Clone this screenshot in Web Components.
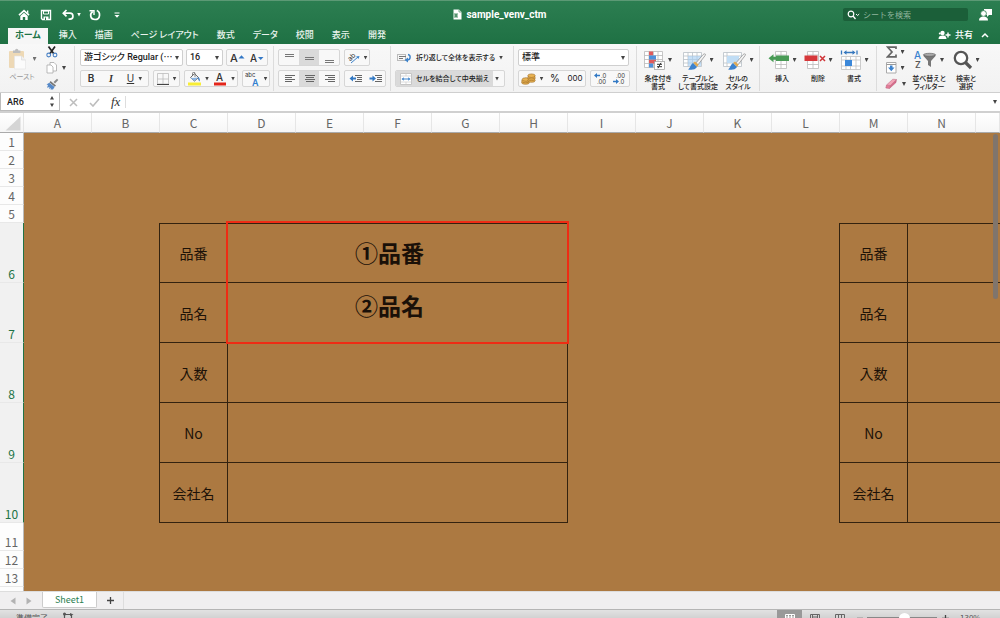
<!DOCTYPE html>
<html lang="ja">
<head>
<meta charset="utf-8">
<title>sample_venv_ctm</title>
<style>
html,body{height:100%}
body{margin:0;overflow:hidden;font-family:"Inter","Noto Sans CJK JP",sans-serif;font-size:9px;color:#222;
--green:#217346;--line:#d2d2d2;--edge:#d6d6d6}
</style>
</head>
<body>
<excel-app></excel-app>
<script>
const ICONS={
home:[12,12,'<path d="M1 6.2 6 1.7l5 4.5" fill="none" stroke="#fff" stroke-width="1.7"/><path d="M2.3 7 6 3.8 9.700 7v4H7.200V8H4.800v3H2.300z" fill="#fff"/><path d="M9 1.500h1.300v3L9 3.500z" fill="#fff"/>'],
save:[12,12,'<path d="M1.500 1.500h9v9h-8l-1-1z" fill="none" stroke="#fff" stroke-width="1.400"/><path d="M3.500 2h5v3h-5z" fill="none" stroke="#fff"/><path d="M3.500 7.500h5V11h-5z" fill="#fff"/><path d="M5 8.500h1V11H5z" fill="#217346"/>'],
undo:[12,12,'<path d="M4.500 1 1.300 4.200l3.200 3.200M1.500 4.200H8a2.900 2.900 0 0 1 0 5.900H6.500" fill="none" stroke="#fff" stroke-width="1.700"/>'],
redo:[12,12,'<path d="M7.800 1.500c4 1.500 3.800 9-1.800 9-5 0-5.500-5.800-2.300-8" fill="none" stroke="#fff" stroke-width="1.700"/><path d="M.5 1.700h4.500v4.300" fill="none" stroke="#fff" stroke-width="1.400"/>'],
more:[6,6,'<path d="M.5 1h5" stroke="#fff"/><path d="M.5 3h5L3 5.800z" fill="#fff"/>'],
doc:[9,11,'<path d="M.5.500h5.500L8.500 3v7.500h-8z" fill="#fff"/><path d="M6 .5V3h2.500" fill="none" stroke="#4b8c66" stroke-width=".7"/><path d="M1 4h4v5H1z" fill="#a9c9b5"/><path d="m2 5 2 3m0-3L2 8" stroke="#287849" stroke-width=".8"/>'],
search:[14,10,'<circle cx="4" cy="4" r="2.800" fill="none" stroke="#fff" stroke-width="1.200"/><path d="m6 6 2.500 3" stroke="#fff" stroke-width="1.300"/><path d="m9 4 1.600 1.500L12.200 4" fill="none" stroke="#fff"/>'],
person:[13,13,'<path d="M5 1h8v6h-3L8 9V7H5z" fill="#fff"/><circle cx="4.500" cy="5.500" r="2.900" fill="#fff" stroke="#267648" stroke-width=".8"/><path d="M0 12.500c0-3 2-4 4.500-4S9 9.500 9 12.500z" fill="#fff"/>'],
share:[13,10,'<circle cx="4.500" cy="3" r="2.200" fill="#fff"/><path d="M.5 9c0-2.500 1.500-3.500 4-3.500s4 1 4 3.500z" fill="#fff"/><path d="M7.500 5h5M10 2.500v5" stroke="#fff" stroke-width="1.400"/><circle cx="1.800" cy="3.600" r="1" fill="#fff"/>'],
chev:[8,6,'<path d="M1 5 4 2l3 3" fill="none" stroke="#fff" stroke-width="1.500"/>'],
paste:[20,22,'<rect x="1" y="3" width="15" height="17" rx="1" fill="#ebcfa0"/><path d="M5 5V2.500h2a1.700 1.700 0 0 1 3.400 0h2V5z" fill="#aaa"/><path d="M6.500 8h7l4 4v9h-11z" fill="#fdfdfd" stroke="#ddd" stroke-width=".6"/><path d="M13.500 8v4h4" fill="#eee" stroke="#ccc" stroke-width=".6"/>'],
cut:[12,12,'<path d="M2.500.500 8 8M9 .5 3.700 8" stroke="#222" stroke-width="1.700"/><circle cx="2.700" cy="9" r="1.900" fill="none" stroke="#4b83c6" stroke-width="1.100"/><circle cx="9" cy="9" r="1.900" fill="none" stroke="#4b83c6" stroke-width="1.100"/>'],
copy:[12,12,'<path d="M4 .5h4L10.500 3v6H4z" fill="#fff" stroke="#aaa" stroke-width=".8"/><path d="M1 3h4l2 2v6H1z" fill="#fff" stroke="#aaa" stroke-width=".8"/>'],
brush:[13,12,'<path d="m7.500 4 3.500-3.300 1.300 1.200L9 5.500z" fill="#8a8a8a"/><path d="m4.500 3 5.500 4.500-1.200 1.300L3.500 4.500z" fill="#777"/><path d="M3.300 4.700 8.600 9 7 11.500H4.500L5 10l-2 1 .5-2-2.500.800L2 7 .5 6.500z" fill="#5689c8"/>'],
aup:[15,12,'<text x="0" y="10" font-size="11" font-weight="500" fill="#333" font-family="Inter">A</text><path d="M8.500 6.500 11.500 3.300 14.500 6.500z" fill="#3478c6"/>'],
adown:[15,12,'<text x="0" y="10" font-size="10" font-weight="500" fill="#333" font-family="Inter">A</text><path d="M8 5h5.500L10.700 8z" fill="#3478c6"/>'],
border:[12,12,'<path d="M.5.500h11V11H.5zM6 .5V11M.5 6h11" fill="none" stroke="#bbb" stroke-width=".8"/><path d="M0 11.500h12" stroke="#444"/>'],
fill:[14,14,'<path d="m3.500 5.500 4-3.800 4 3.800-4 3.500z" fill="#fff" stroke="#666"/><path d="m3.500 6 4 3L11 5.500z" fill="#8ab5e4"/><path d="M5.500 4V1.500A1.200 1.200 0 0 1 8 1.500V5" fill="none" stroke="#666" stroke-width=".8"/><path d="M11 5c2 1 2 3 1.500 4.500C11.500 8.500 11 7 11 5z" fill="#3577bd"/><path d="M1 10.500h13v3H1z" fill="#f8ed35"/>'],
fcolor:[14,14,'<text x="3" y="9" font-size="10" font-weight="500" font-family="Inter" fill="#333">A</text><path d="M1 10.500h12v3H1z" fill="#e4261b"/>'],
phon:[15,15,'<text x="0" y="6" font-size="6" font-family="Inter" fill="#333">abc</text><text x="7" y="15" font-size="9" font-weight="600" font-family="Inter" fill="#337fce">A</text>'],
vtop:[10,10,'<path d="M1 1.500h9M1 3.500h9" stroke="#777"/>'],
vmid:[10,10,'<path d="M1 4.500h9M1 6.500h9" stroke="#777"/>'],
vbot:[10,10,'<path d="M1 7.500h9M1 9.500h9" stroke="#777"/>'],
left:[11,10,'<path d="M1 1.500h10M1 3.500h7M1 5.500h10M1 7.500h7" stroke="#666"/>'],
center:[11,10,'<path d="M1 1.500h10M2 3.500h8M1 5.500h10M2 7.500h8" stroke="#666"/>'],
right:[11,10,'<path d="M1 1.500h10M4 3.500h7M1 5.500h10M4 7.500h7" stroke="#666"/>'],
orient:[13,13,'<text x="1" y="9" font-size="7" font-family="Inter" fill="#333" transform="rotate(-45 4 7)">ab</text><path d="m4 12 7-6" stroke="#3c82cb"/><path d="m9 5.500 3.500-.5-1 3z" fill="#3c82cb"/>'],
out:[13,10,'<path d="M6 1.500h7M8 3.500h5M8 5.500h5M6 7.500h7" stroke="#666"/><path d="m.5 4.500 3.500-3v2h3v2H4v2z" fill="#3279c4"/>'],
in:[13,10,'<path d="M6 1.500h7M8 3.500h5M8 5.500h5M6 7.500h7" stroke="#666"/><path d="M7 4.500 3.500 1.500v2h-3v2h3v2z" fill="#3279c4"/>'],
wrap:[15,12,'<path d="M.5 2.500h8M.5 8.500h8M.5 2v7M8.500 2v7" stroke="#bbb" fill="none"/><path d="M2 4.500h7M2 6.500h4" stroke="#777"/><path d="M11 2.500c3 .5 3 5.500-1 5.500" fill="none" stroke="#3e83ca" stroke-width="1.400"/><path d="m7.500 8 3.500-2.500v5z" fill="#3e83ca"/>'],
merge:[12,12,'<path d="M.5.500h11v11H.5z" fill="#fff" stroke="#c5c5c5"/><path d="M.5 3h11M.5 9h11M6 .5V3M6 9v2.500" stroke="#ccc" stroke-width=".7"/><path d="M3 6h6" stroke="#3e83ca"/><path d="m1.500 6 2.200-1.800v3.600zM10.500 6 8.300 4.200v3.600z" fill="#3e83ca"/>'],
coins:[15,12,'<g fill="#e9b352" stroke="#9b6927" stroke-width=".6"><ellipse cx="4.500" cy="9.500" rx="3.900" ry="1.800"/><ellipse cx="4.500" cy="8" rx="3.900" ry="1.800"/><ellipse cx="5" cy="6.500" rx="3.900" ry="1.800"/><ellipse cx="10.500" cy="7.500" rx="3.700" ry="1.800"/><ellipse cx="10.500" cy="5.800" rx="3.700" ry="1.800"/><ellipse cx="10.500" cy="4.200" rx="3.700" ry="1.800"/><ellipse cx="10.500" cy="2.700" rx="3.700" ry="1.800"/></g>'],
inc:[13,13,'<path d="m0 3.500 3-2.500v1.700h3v1.600H3V6z" fill="#3279c4"/><text x="7" y="6" font-size="6" font-family="Inter" fill="#333">.0</text><text x="3" y="12" font-size="6" font-family="Inter" fill="#333">.00</text>'],
dec:[13,13,'<path d="m6 9.500-3-2.500v1.700H0v1.600h3V12z" fill="#3279c4"/><text x="3" y="6" font-size="6" font-family="Inter" fill="#333">.00</text><text x="6" y="12" font-size="6" font-family="Inter" fill="#333">.0</text>'],
cond:[21,20,'<path d="M.5 1.500h18v16H.5zM5 1.500v16M9.500 1.500v16M14 1.500v16M.5 5.500h18M.5 9.500h18M.5 13.500h18" fill="#fff" stroke="#b9b9b9" stroke-width=".8"/><path d="M5 1.500h4v4H5zM5 9.500h7v4H5z" fill="#df5a5c"/><path d="M5 5.500h7v4H5zM5 13.500h4v4H5z" fill="#4c91dc"/><rect x="10.500" y="11.500" width="10" height="8" fill="#fff" stroke="#999" stroke-width=".7"/><path d="M13 14.300h5M13 16.700h5M17 12.800l-3 5.400" stroke="#333"/>'],
table:[24,21,'<path d="M.5 2.500h18v14H.5zM5 2.500v14M9.500 2.500v14M14 2.500v14M.5 6h18M.5 9.500h18M.5 13h18" fill="#fff" stroke="#b9c0c6" stroke-width=".8"/><path d="M5 6h13v10H5z" fill="#a9d0f2" opacity=".65"/><path d="m12 14 8-9.300c2-1.700 3.300-.7 1.800 1.300L14 16z" fill="#f4f4f4" stroke="#888" stroke-width=".7"/><path d="m10 13 2-1.500 3.500 3L14 17z" fill="#dfaa55"/><path d="m10 13 4 4c-2 3-5 3-9 2.500 2-1 2.500-5 5-6.500z" fill="#3c82cd"/>'],
style:[24,21,'<path d="M.5 2.500h18v14H.5zM4 2.500v14M.5 6h18M.5 13h18" fill="#fff" stroke="#b9c0c6" stroke-width=".8"/><path d="M4 6h12v7H4z" fill="#c0ddf5"/><path d="m12 14 8-9.300c2-1.700 3.300-.7 1.800 1.300L14 16z" fill="#f4f4f4" stroke="#888" stroke-width=".7"/><path d="m10 13 2-1.500 3.500 3L14 17z" fill="#dfaa55"/><path d="m10 13 4 4c-2 3-5 3-9 2.500 2-1 2.500-5 5-6.500z" fill="#3c82cd"/>'],
insert:[22,20,'<path d="M7.500 1.500h11v17h-11zM13 1.500v17M7.500 5h11M7.500 14.500h11" fill="#fff" stroke="#bbb" stroke-width=".8"/><path d="M8 5.500h13v5.500H8z" fill="#499b56"/><path d="m.5 8.200 5-4v2.500H8v3H5.500v2.500z" fill="#499b56"/>'],
delete:[22,20,'<path d="M3.500 1.500h11v17h-11zM9 1.500v17M3.500 5h11M3.500 14.500h11" fill="#fff" stroke="#bbb" stroke-width=".8"/><path d="M.5 5.500h13V11H.5z" fill="#d6383b"/><path d="m16 6 5 5m0-5-5 5" stroke="#cf3337" stroke-width="1.500"/>'],
format:[22,21,'<path d="M1.500 6.500h19v13h-19zM6 6.500v13M10.500 6.500v13M16 6.500v13M1.500 10h19M1.500 16h19" fill="#fff" stroke="#c0c0c0" stroke-width=".8"/><path d="M5 10h7v6H5z" fill="#3c88d9"/><path d="M1.500.500v4M17 .5v4M5 2.500h9" stroke="#3577bd" stroke-width="1.300"/><path d="m3.500 2.500 3-2.300v4.600zM15.500 2.500l-3-2.300v4.600z" fill="#3577bd"/>'],
sum:[11,12,'<path d="M10 3V1.200H1.800L6 6 1.500 10.800H10V8.500" fill="none" stroke="#666" stroke-width="1.700"/>'],
down:[11,12,'<path d="M.5.500h9.500v10.500H.5z" fill="#fff" stroke="#aaa"/><path d="M.5 2.500H10" stroke="#999"/><path d="M4 3.500h2.500v2h2L5.300 9.200 2 5.500h2z" fill="#3c82cd"/>'],
erase:[13,12,'<path d="m1.500 7 6.300-5.800 3.700.300-6 6z" fill="#f4a5b8"/><path d="m1.500 7-.7 3 3.700.5.800-3z" fill="#e77b98"/><path d="m5.300 7.500 6.200-6-.5 3-6.500 6z" fill="#d96787"/><path d="m1.500 7 6.300-5.800 3.700.300-.5 3-6.500 6-3.700-.5zM1.500 7l3.800.5 6.200-6M5.300 7.500l-.8 3" fill="none" stroke="#b7657e" stroke-width=".5"/>'],
sort:[23,20,'<text x="0" y="9" font-size="10" font-family="Inter" fill="#3a82cf">A</text><text x="1" y="18" font-size="9" font-family="Inter" fill="#555">Z</text><path d="M9.500 4.500h12v1.500l-4.500 5v6l-3-2v-4L9.500 6z" fill="#777"/><ellipse cx="15.500" cy="4.800" rx="6" ry="1.500" fill="#aaa" stroke="#666" stroke-width=".7"/>'],
find:[20,20,'<circle cx="8" cy="8" r="6.200" fill="#fdfdfd" stroke="#555" stroke-width="2.300"/><path d="m12.500 12.500 5.500 5.500" stroke="#555" stroke-width="3.200"/>'],
x:[9,9,'<path d="m1 1 7 7m0-7L1 8" stroke="#bdbdbd" stroke-width="1.500"/>'],
check:[11,9,'<path d="m1 5 3 3 6-7" fill="none" stroke="#bdbdbd" stroke-width="1.600"/>'],
step:[6,13,'<path d="M1 4.500 3 1l2 3.500zM1 8.500h4L3 12z" fill="#444"/>'],
prev:[6,8,'<path d="M5.500.500v7L.5 4z" fill="#b3b3b3"/>'],
next:[6,8,'<path d="M.5.500v7l5-3.500z" fill="#b3b3b3"/>'],
plus:[9,9,'<path d="M1 4.500h7M4.500 1v7" stroke="#444" stroke-width="1.300"/>'],
minus:[6,9,'<path d="M0 4.500h6" stroke="#555" stroke-width="1.500"/>'],
access:[12,12,'<path d="M3 2.500h6M2.500 1v10M9.500 3v8" stroke="#555" stroke-width="1.200"/><circle cx="2.500" cy="2" r="1.500" fill="#555"/><path d="m8 1 3.500 1.500L8 4z" fill="#555"/>'],
vnorm:[10,9,'<path d="M.5.500h9v8h-9zM3.500.500v8M6.500.500v8M.5 3h9M.5 6h9" fill="none" stroke="#fff"/>'],
vpage:[10,9,'<path d="M.5.500h9v8h-9zM3 3h4M3 5h4M3 7h4M2.500 1v8M7.500 1v8" fill="none" stroke="#666"/>'],
vbreak:[10,9,'<path d="M.5.500h9v8h-9zM3.500.500v5M6.500.500v5M.5 5.500h6" fill="none" stroke="#666"/>'],
corner:[16,15,'<path d="M15.500.500v14H.5z" fill="#d5d5d5"/>']
};
function define(name,css,html,after){
  const t=document.createElement('template');
  t.innerHTML='<style>*{box-sizing:border-box}'+css+'</style>'+html;
  customElements.define(name,class extends HTMLElement{
    constructor(){super();this.attachShadow({mode:'open'})}
    connectedCallback(){
      if(this.shadowRoot.childNodes.length)return;
      this.shadowRoot.append(t.content.cloneNode(true));
      if(after)after(this,this.shadowRoot);
    }
  });
}
define('ui-icon',':host{display:inline-flex;flex:none}svg{display:block}','<svg aria-hidden="true"></svg>',(el,r)=>{
  const [w,h,s]=ICONS[el.getAttribute('name')],g=r.querySelector('svg');
  g.setAttribute('width',w);g.setAttribute('height',h);g.setAttribute('viewBox',`0 0 ${w} ${h}`);g.innerHTML=s;
});
define('ui-caret',':host{display:block;flex:none;width:4px;height:4px;background:#444;clip-path:polygon(0 0,100% 0,50% 100%)}','');
/* Plain icon or text button used across the window chrome */
define('tool-button',`:host{display:flex;flex:none}
button{display:flex;align-items:center;justify-content:center;gap:4px;width:100%;height:100%;margin:0;padding:0;border:0;background:none;font:inherit;color:inherit;white-space:nowrap}
:host([on]) button{background:var(--on,#dadada)}`,'<button type="button"><slot></slot></button>',(el,r)=>{
  if(el.hasAttribute('label'))r.querySelector('button').setAttribute('aria-label',el.getAttribute('label'));
});
/* Icon with a two-line caption under it */
define('big-button',`:host{display:block;flex:none;width:40px}
button{display:flex;flex-direction:column;align-items:center;width:100%;margin:0;padding:0;border:0;background:none;font:500 7px/8px "Noto Sans CJK JP",sans-serif;font-feature-settings:"palt";color:#222;white-space:nowrap}
.pic{display:flex;align-items:center;justify-content:center;gap:3px;height:22px;margin-bottom:3px}`,
'<button type="button"><span class="pic"><ui-caret></ui-caret></span><span><slot></slot></span></button>',(el,r)=>{
  const i=document.createElement('ui-icon');i.setAttribute('name',el.getAttribute('icon'));r.querySelector('.pic').prepend(i);
});
define('button-set',`:host{display:flex;flex:none;height:17px;border:1px solid var(--edge);border-radius:2px;background:#f8f8f8;overflow:hidden}`,'<slot></slot>');
define('ribbon-group',`:host{display:flex;flex:none;align-items:flex-start;height:45px;border-right:1px solid #dcdcdc}`,'<slot></slot>');
define('drop-down',`:host{display:block;flex:none;position:relative;height:17px;background:#fff;border:1px solid #cfcfcf;border-radius:2px}
select{appearance:none;display:block;width:100%;height:15px;margin:0;padding:0 10px 0 3px;border:0;background:none;font:500 9px/15px "Roboto","Noto Sans CJK JP",sans-serif;font-feature-settings:"palt";color:#222}
ui-caret{position:absolute;right:3px;top:6px;pointer-events:none}`,'<select></select><ui-caret></ui-caret>',(el,r)=>{
  const s=r.querySelector('select');s.setAttribute('aria-label',el.getAttribute('label'));s.add(new Option(el.getAttribute('value')));
});
define('title-bar',`:host{display:grid;grid-template-columns:1fr auto 1fr;align-items:center;height:28px;padding:0 8px 0 18px;border-top:1px solid #5c9975;color:#fff}
nav{display:flex;align-items:center;gap:10px}ui-caret{background:#fff}
.u{display:flex;align-items:center;gap:3px;margin-right:-2px}
h1{display:flex;align-items:center;gap:4px;margin:0;padding-right:10px;font:700 10px/14px "Roboto",sans-serif}
.end{display:flex;align-items:center;justify-content:flex-end;gap:11px}
label{display:flex;align-items:center;gap:2px;width:125px;height:13px;padding-left:4px;background:#1b5f39;border-radius:2px}
input{width:90px;height:13px;padding:0;border:0;background:none;font:8px/13px "Noto Sans CJK JP",sans-serif;color:#fff}
input::placeholder{color:#8fb59d}`,
`<nav><tool-button label="ホーム画面"><ui-icon name="home"></ui-icon></tool-button><tool-button label="保存"><ui-icon name="save"></ui-icon></tool-button><tool-button label="元に戻す"><span class="u"><ui-icon name="undo"></ui-icon><ui-caret></ui-caret></span></tool-button><tool-button label="繰り返し"><ui-icon name="redo"></ui-icon></tool-button><tool-button label="カスタマイズ" style="margin-left:3px"><ui-icon name="more"></ui-icon></tool-button></nav>
<h1><ui-icon name="doc"></ui-icon>sample_venv_ctm</h1>
<div class="end"><label><ui-icon name="search"></ui-icon><input type="search" aria-label="シートを検索" placeholder="シートを検索"></label><tool-button label="アカウント"><ui-icon name="person"></ui-icon></tool-button></div>`);
define('ribbon-tabs',`:host{display:flex;justify-content:space-between;height:16px;padding:0 11px 0 8px;font:500 9px/14px "Noto Sans CJK JP",sans-serif;font-feature-settings:"palt";color:#fff}
nav{display:flex;gap:2px}a{padding:0 8px;color:#e9f3ed;text-decoration:none}
a[aria-current]{padding:0 7px;background:#f6f6f6;color:var(--green);font-weight:700;margin-right:1px}
.end{display:flex;gap:8px;align-items:center;height:14px}`,
`<nav>${['ホーム','挿入','描画','ページ レイアウト','数式','データ','校閲','表示','開発'].map((t,i)=>`<a href="#"${i?'':' aria-current="page"'}>${t}</a>`).join('')}</nav>
<div class="end"><tool-button><ui-icon name="share"></ui-icon>共有</tool-button><tool-button label="リボンを折りたたむ"><ui-icon name="chev"></ui-icon></tool-button></div>`);
const tb=(icon,label,w,o='')=>`<tool-button label="${label}" style="width:${w}px" ${o}><ui-icon name="${icon}"></ui-icon></tool-button>`;
const tc=(icon,label,w)=>`<tool-button label="${label}" style="width:${w}px"><ui-icon name="${icon}"></ui-icon><ui-caret></ui-caret></tool-button>`;
define('ribbon-bar',`:host{display:flex;height:49px;padding-top:2px;background:linear-gradient(#f8f8f8,#f2f2f2);border-bottom:1px solid #cfcfcf;overflow:hidden}
.rows{display:grid;grid-template-rows:17px 17px;row-gap:4px;padding-top:3px}
.row{display:flex;gap:4px}
.clip{display:grid;grid-template-rows:repeat(3,12px);row-gap:4px;width:20px;justify-items:start}
.clip tool-button{height:12px}
.home{width:75px;padding-left:8px}.paste{display:flex;flex-direction:column;align-items:center;width:28px;margin-right:10px;padding-top:2px}
.paste button{padding:0;border:0;background:none;font:7px/9px "Noto Sans CJK JP",sans-serif;font-feature-settings:"palt";color:#999;white-space:nowrap}
.paste span{display:flex;align-items:center;gap:5px;margin-bottom:2px;opacity:.75}
.font{width:199px;padding-left:5px}.align{width:117px;padding-left:4px}.wrapg{width:123px;padding-left:4px}.num{width:123px;padding-left:4px}
.w{font:500 7px/15px "Noto Sans CJK JP",sans-serif;font-feature-settings:"palt"}
.wide{height:17px;width:110px;font:500 7px/15px "Noto Sans CJK JP",sans-serif;font-feature-settings:"palt"}
.ch{font:600 10px/15px "Inter",sans-serif;width:20px;color:#333}.pc{font:10px/15px "Inter",sans-serif;width:20px}.k{font:8px/15px "Inter",sans-serif;width:20px}
.styles{width:123px;padding-left:1px}.cells{width:117px;padding:0 4px 0 4px}.edit{padding-left:8px;border:0}
.cells big-button{width:36px}.big{padding-top:3px}`,
`<ribbon-group class="home"><div class="paste"><button type="button"><span><ui-icon name="paste"></ui-icon><ui-caret></ui-caret></span>ペースト</button></div>
<div class="clip">${tb('cut','切り取り',12)}${tc('copy','コピー',20)}${tb('brush','書式のコピー',13)}</div></ribbon-group>
<ribbon-group class="font"><div class="rows"><div class="row" style="gap:3px"><drop-down label="フォント" value="游ゴシック Regular (⋯" style="width:103px"></drop-down><drop-down label="フォント サイズ" value="16" style="width:37px"></drop-down><button-set>${tb('aup','拡大',20)}${tb('adown','縮小',20)}</button-set></div>
<div class="row"><button-set style="width:69px"><tool-button class="ch">B</tool-button><tool-button class="ch"><i style="font-family:Liberation Serif">I</i></tool-button><tool-button class="ch" style="width:27px"><u style="font-weight:400">U</u><ui-caret></ui-caret></tool-button></button-set><button-set>${tc('border','罫線',25)}</button-set><button-set>${tc('fill','塗りつぶし',26)}${tc('fcolor','文字色',26)}</button-set><button-set>${tc('phon','ふりがな',26)}</button-set></div></div></ribbon-group>
<ribbon-group class="align"><div class="rows"><div class="row"><button-set>${tb('vtop','上揃え',20)}${tb('vmid','上下中央',20,'on')}${tb('vbot','下揃え',20)}</button-set><button-set>${tc('orient','方向',24)}</button-set></div>
<div class="row"><button-set>${tb('left','左揃え',20)}${tb('center','中央揃え',20,'on')}${tb('right','右揃え',20)}</button-set><button-set>${tb('out','インデント解除',20)}${tb('in','インデント',20)}</button-set></div></div></ribbon-group>
<ribbon-group class="wrapg"><div class="rows"><tool-button class="wide"><ui-icon name="wrap"></ui-icon>折り返して全体を表示する<ui-caret></ui-caret></tool-button><button-set class="w"><tool-button on style="width:97px"><ui-icon name="merge"></ui-icon>セルを結合して中央揃え</tool-button><tool-button label="結合オプション" style="width:8px"><ui-caret></ui-caret></tool-button></button-set></div></ribbon-group>
<ribbon-group class="num"><div class="rows"><drop-down label="表示形式" value="標準" style="width:111px"></drop-down><div class="row"><button-set>${tc('coins','通貨',26)}<tool-button class="pc">%</tool-button><tool-button class="k">000</tool-button></button-set><button-set>${tb('inc','小数点以下を増やす',19)}${tb('dec','小数点以下を減らす',19)}</button-set></div></div></ribbon-group>
<ribbon-group class="styles big"><big-button icon="cond">条件付き<br>書式</big-button><big-button icon="table">テーブルと<br>して書式設定</big-button><big-button icon="style">セルの<br>スタイル</big-button></ribbon-group>
<ribbon-group class="cells big"><big-button icon="insert">挿入</big-button><big-button icon="delete">削除</big-button><big-button icon="format">書式</big-button></ribbon-group>
<ribbon-group class="edit"><div class="clip" style="width:24px">${tc('sum','合計',20)}${tc('down','フィル',20)}${tc('erase','クリア',21)}</div><big-button class="big" icon="sort">並べ替えと<br>フィルター</big-button><big-button class="big" icon="find" style="width:34px">検索と<br>選択</big-button></ribbon-group>`);
define('formula-bar',`:host{display:flex;height:20px;background:#fff;border-bottom:2px solid #d0d0d0}
.name{display:flex;align-items:center;width:60px;padding:0 4px 0 4px;border:1px solid #bbb;border-width:0 1px 1px}
.name input{flex:1;min-width:0;height:16px;padding:0 2px;border:0;background:none;font:500 9px/16px "Roboto",sans-serif;color:#222}
.btns{display:flex;align-items:center;gap:11px;padding:0 5px 0 9px;border-right:1px solid #ddd;margin:3px 0}
.fx{font:italic 13px/14px "Liberation Serif",serif;color:#333}
.f{flex:1;min-width:0;border:0;background:none}.end{width:10px}`,
`<div class="name"><input aria-label="名前ボックス" value="AR6"><ui-icon name="step"></ui-icon></div><div class="btns"><tool-button label="キャンセル"><ui-icon name="x"></ui-icon></tool-button><tool-button label="入力"><ui-icon name="check"></ui-icon></tool-button><tool-button class="fx">fx</tool-button></div><input class="f" aria-label="数式バー"><tool-button class="end" label="数式バーを広げる"><ui-caret></ui-caret></tool-button>`);
const LABELS={6:'品番',7:'品名',8:'入数',9:'No',10:'会社名'};
let rows='';
for(let r=1;r<=14;r++){
  const l=LABELS[r],cls=l?'tall':r===11?'mid':'';
  rows+=`<tr class="${cls}"><th scope="row">${r<14?r:''}</th>`+(l
    ?`<td></td><td class="e"></td><td class="b">${l}</td><td class="b" colspan="5"></td><td colspan="3"></td><td class="e"></td><td class="b">${l}</td><td class="h" colspan="2"></td>`
    :'<td colspan="15"></td>')+'</tr>';
}
define('sheet-grid',`:host{display:block;position:relative;flex:1;min-height:0;overflow:hidden;background:#ac7941}
table{width:100%;table-layout:fixed;border-collapse:separate;border-spacing:0;font:12px/16px "Noto Sans CJK JP",sans-serif}
col{width:68px}.n{width:24px}.rest{width:auto}
th,td{padding:0;font-weight:400}
thead th{height:20px;line-height:19px;background:linear-gradient(#fff,#f6f6f6);border-right:1px solid #e6e6e6;border-bottom:1px solid #aaa;color:#666;vertical-align:top}
thead ui-icon{display:block;margin:3px 0 0 5px}
tbody tr{height:18px}tbody th{background:#fdfdfd;border-right:1px solid #bbb;border-bottom:1px solid #e8e8e8;color:#666;vertical-align:bottom}
.tall{height:60px}.tall th{background:#f1f1f1;color:var(--green);border-right:1px solid var(--green)}
.mid{height:28px}
.tall td{text-align:center;font-size:14px;line-height:20px;color:#1c1208;border:0 solid #33220f}
.tall td.b{border-width:0 1px 1px 0}.tall td.e{border-right-width:1px}.tall td.h{border-bottom-width:1px}
tr:not(.tall)+.tall td.b,tr:not(.tall)+.tall td.h{border-top-width:1px}
.mark{position:absolute;left:226px;top:108px;width:343px;height:123px;border:2px solid #ee2c14;padding:12px 16px 0 0;text-align:center;font:700 23px/34px "Noto Sans CJK JP",sans-serif;color:#1a1008}
.mark p{margin:0 0 19px}
.bar{position:absolute;right:2px;top:21px;width:5px;height:165px;border-radius:3px;background:#80756c}`,
`<table><colgroup><col class="n">${'<col>'.repeat(14)}<col class="rest"></colgroup><thead><tr><th><ui-icon name="corner"></ui-icon></th>${[...'ABCDEFGHIJKLMN'].map(c=>`<th scope="col">${c}</th>`).join('')}<th></th></tr></thead><tbody>${rows}</tbody></table>
<div class="mark"><p>①品番</p><p>②品名</p></div><div class="bar"></div>`);
define('sheet-tabs',`:host{display:flex;align-items:flex-start;flex:none;height:18px;background:#f0eff0;border-top:1px solid #ddd}
.nav{display:flex;gap:10px;align-items:center;height:18px;padding:0 10px 0 10px}
a{width:55px;height:16px;background:#fff;border:1px solid #ccc;border-top:0;border-radius:0 0 2px 2px;text-align:center;font:9px/15px "Noto Sans CJK JP",sans-serif;color:#2a8050;text-decoration:none}
.add{width:27px;height:17px;border-right:1px solid #ddd}`,
`<div class="nav"><tool-button label="前のシート"><ui-icon name="prev"></ui-icon></tool-button><tool-button label="次のシート"><ui-icon name="next"></ui-icon></tool-button></div><a href="#">Sheet1</a><tool-button class="add" label="シートを追加"><ui-icon name="plus"></ui-icon></tool-button>`);
define('status-bar',`:host{display:block;flex:none;height:9px;overflow:hidden;background:linear-gradient(#e2e2e2,#d2d2d2);border-top:1px solid #b5b5b5;--on:#999}
.in{display:flex;align-items:center;height:16px;padding:0 16px;font:8px/12px "Noto Sans CJK JP",sans-serif;color:#555}
.s{display:flex;align-items:center;gap:14px}.z{display:flex;align-items:center;margin-left:auto}
.z tool-button{width:25px;height:16px}
.zoom{display:flex;align-items:center;gap:4px;margin-left:5px}
input{appearance:none;width:70px;height:10px;margin:0;background:linear-gradient(#888,#888) center/100% 2px no-repeat}
input::-webkit-slider-thumb{appearance:none;width:11px;height:11px;border-radius:50%;background:#fff}
output{width:24px;margin-left:6px}`,
`<div class="in"><div class="s"><span>準備完了</span><ui-icon name="access"></ui-icon></div><div class="z"><tool-button on label="標準"><ui-icon name="vnorm"></ui-icon></tool-button><tool-button label="ページ レイアウト"><ui-icon name="vpage"></ui-icon></tool-button><tool-button label="改ページ"><ui-icon name="vbreak"></ui-icon></tool-button><div class="zoom"><ui-icon name="minus"></ui-icon><input type="range" aria-label="ズーム" min="0" max="100" value="54"><ui-icon name="plus"></ui-icon><output>130%</output></div></div></div>`);
define('excel-app',`:host{display:flex;flex-direction:column;height:100vh;overflow:hidden}
header{flex:none;background:linear-gradient(#2c7e51,#1f7144)}`,
'<header><title-bar></title-bar><ribbon-tabs></ribbon-tabs></header><ribbon-bar></ribbon-bar><formula-bar></formula-bar><sheet-grid></sheet-grid><sheet-tabs></sheet-tabs><status-bar></status-bar>');
</script>
</body>
</html>
